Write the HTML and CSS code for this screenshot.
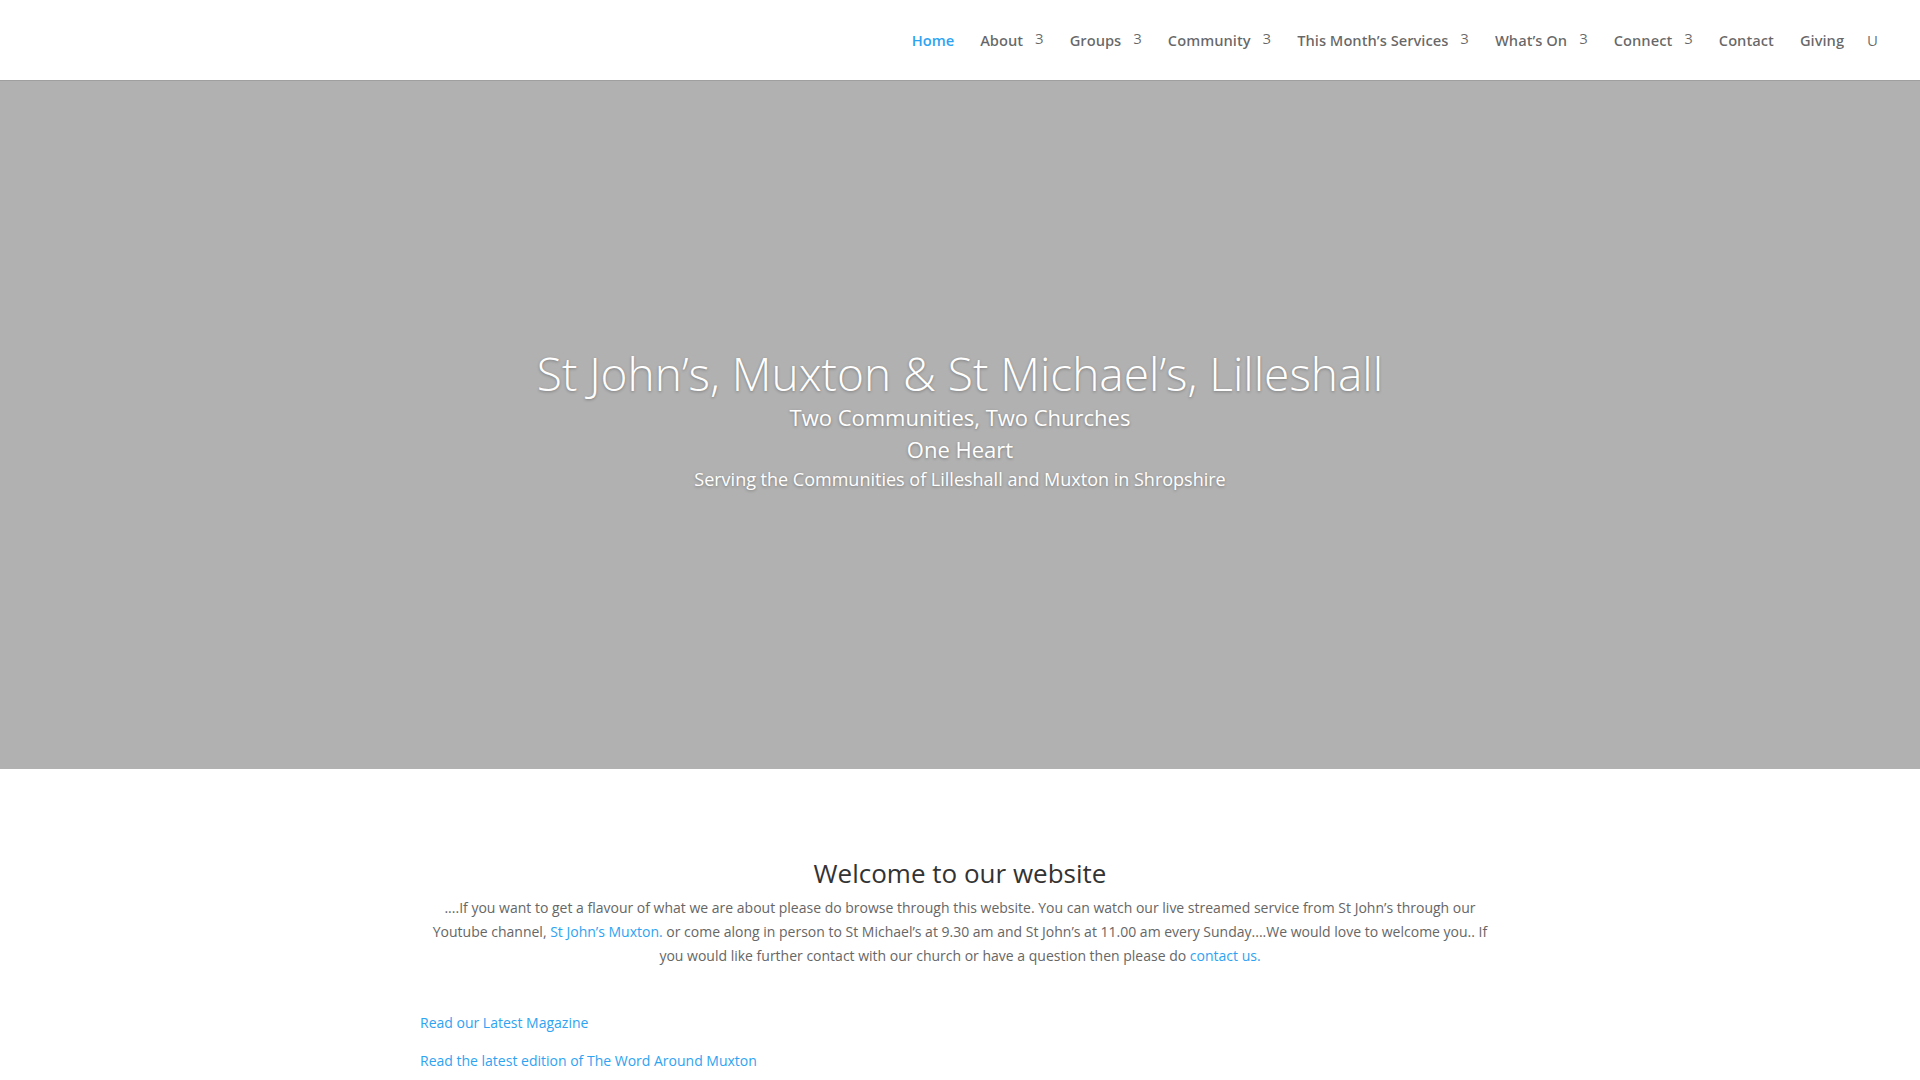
FILE: index.html
```html
<!DOCTYPE html>
<html lang="en">
<head>
    <meta charset="UTF-8">
    <meta name="viewport" content="width=device-width, initial-scale=1.0">
    <title>St John's, Muxton &amp; St Michael's, Lilleshall</title>
    <link rel="stylesheet" href="styles.css">
</head>
<body>
    <header class="site-header">
        <nav class="top-menu">
            <a href="#" class="menu-item current">Home</a>
            <a href="#" class="menu-item">About<span class="arrow">3</span></a>
            <a href="#" class="menu-item">Groups<span class="arrow">3</span></a>
            <a href="#" class="menu-item">Community<span class="arrow">3</span></a>
            <a href="#" class="menu-item">This Month’s Services<span class="arrow">3</span></a>
            <a href="#" class="menu-item">What’s On<span class="arrow">3</span></a>
            <a href="#" class="menu-item">Connect<span class="arrow">3</span></a>
            <a href="#" class="menu-item">Contact</a>
            <a href="#" class="menu-item">Giving</a>
            <span class="search-icon">U</span>
        </nav>
    </header>

    <!-- Slider principal -->
    <section class="hero">
        <div class="hero-text">
            <h1 class="hero-title">St John’s, Muxton &amp; St Michael’s, Lilleshall</h1>
            <p class="hero-line">Two Communities, Two Churches</p>
            <p class="hero-line">One Heart</p>
            <p class="hero-small">Serving the Communities of Lilleshall and Muxton in Shropshire</p>
        </div>
    </section>

    <main class="content">
        <div class="intro">
            <h2>Welcome to our website</h2>
            <p>....If you want to get a flavour of what we are about please do browse through this website. You can watch our live streamed service from St John’s through our Youtube channel, <a href="#">St John’s Muxton.</a> or come along in person to St Michael’s at 9.30 am and St John’s at 11.00 am every Sunday....We would love to welcome you.. If you would like further contact with our church or have a question then please do <a href="#">contact us.</a></p>
        </div>

        <div class="links">
            <p><a href="#">Read our Latest Magazine</a></p>
            <p><a href="#">Read the latest edition of The Word Around Muxton</a></p>
        </div>
    </main>
</body>
</html>
```

FILE: styles.css
```css
body {
    margin: 0;
    font-family: "Open Sans", Arial, sans-serif;
    font-size: 14px;
    color: #666;
    background-color: #fff;
}

a {
    color: #2ea3f2;
    text-decoration: none;
}

/* Cabecera */
.site-header {
    height: 80px;
    background-color: #fff;
    box-shadow: 0 1px 0 rgba(0, 0, 0, 0.1);
    display: flex;
    justify-content: flex-end;
    align-items: center;
    padding-right: 42px;
    position: relative;
    z-index: 2;
}

.top-menu {
    display: flex;
    align-items: center;
    gap: 26px;
}

.menu-item {
    font-size: 14.7px;
    font-weight: 600;
    color: rgba(0, 0, 0, 0.6);
}

.menu-item.current {
    color: #2ea3f2;
}

.arrow {
    margin-left: 12px;
    font-weight: 400;
    font-size: 15px;
    position: relative;
    top: -2px;
}

.search-icon {
    font-size: 15px;
    color: rgba(0, 0, 0, 0.6);
    margin-left: -3px;
}

/* Slider */
.hero {
    height: 689px;
    background-color: #b1b1b1;
    display: flex;
    justify-content: center;
    align-items: center;
    text-align: center;
    color: #fff;
    text-shadow: 0 1px 3px rgba(0, 0, 0, 0.3);
}

.hero-text {
    padding-bottom: 9px;
}

.hero-title {
    margin: 0 0 3px;
    font-size: 46px;
    font-weight: 300;
    line-height: 50px;
}

.hero-line {
    margin: 0;
    font-size: 22px;
    line-height: 32px;
}

.hero-small {
    margin: 0;
    font-size: 18px;
    line-height: 28px;
}

/* Contenido */
.content {
    width: 1080px;
    margin: 0 auto;
    padding-top: 91px;
}

.intro {
    text-align: center;
}

.intro h2 {
    margin: 0;
    padding-bottom: 10px;
    font-size: 26px;
    font-weight: 500;
    line-height: 26px;
    color: #333;
}

.intro p {
    margin: 0;
    line-height: 23.8px;
}

.links {
    margin-top: 44px;
}

.links p {
    margin: 0;
    padding-bottom: 14px;
    line-height: 23.8px;
}
```
